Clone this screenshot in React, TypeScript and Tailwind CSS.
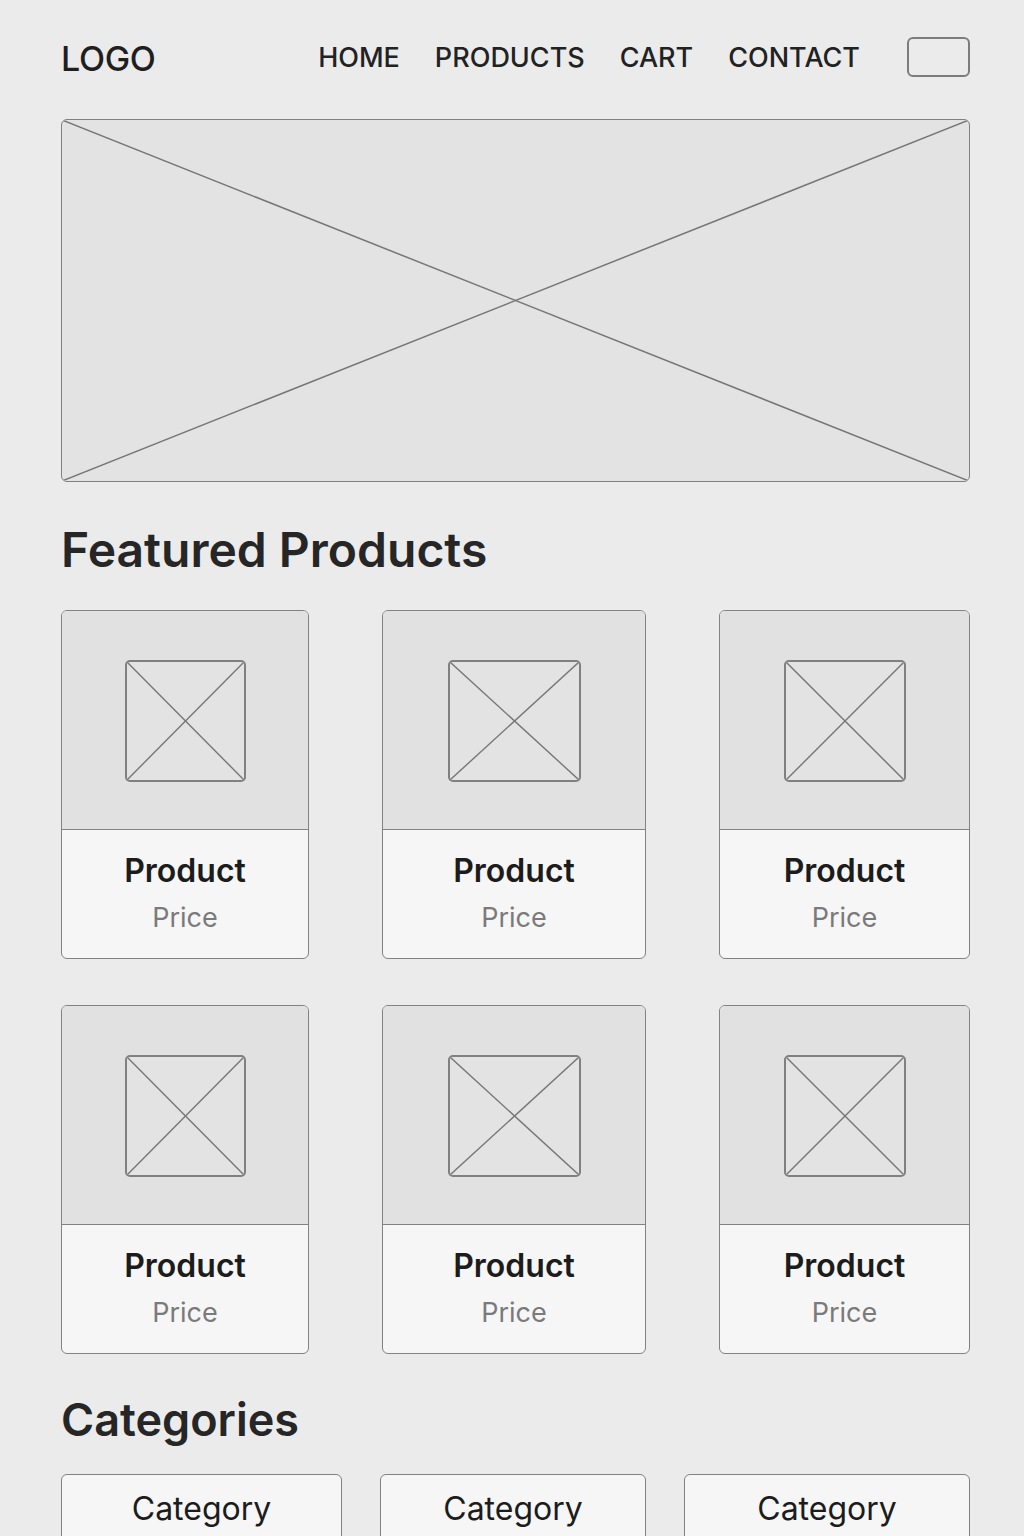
import React from 'react'

type Card = { id: number; ph: string }

const rows: Card[][] = [
  [
    { id: 1, ph: 'w-[121px]' },
    { id: 2, ph: 'w-[133px]' },
    { id: 3, ph: 'w-[122px]' },
  ],
  [
    { id: 4, ph: 'w-[121px]' },
    { id: 5, ph: 'w-[133px]' },
    { id: 6, ph: 'w-[122px]' },
  ],
]

// X-shaped line pair, stretches to whatever box it sits in
function Cross({ width = 1.4 }: { width?: number }) {
  return (
    <svg className="absolute inset-0 h-full w-full" viewBox="0 0 100 100" preserveAspectRatio="none">
      <line x1="0" y1="0" x2="100" y2="100" stroke="#767676" strokeWidth={width} vectorEffect="non-scaling-stroke" />
      <line x1="100" y1="0" x2="0" y2="100" stroke="#767676" strokeWidth={width} vectorEffect="non-scaling-stroke" />
    </svg>
  )
}

function ProductCard({ ph }: { ph: string }) {
  return (
    <div className="flex h-[349px] flex-col overflow-hidden rounded-[6px] border-[1.5px] border-[#828282] bg-[#f6f6f6]">
      <div className="flex h-[219px] items-center justify-center border-b-[1.5px] border-[#828282] bg-[#e1e1e1]">
        <div className={`relative h-[122px] ${ph} mt-[2px] overflow-hidden rounded-[5px] border-2 border-[#808080] bg-[#e3e3e3]`}>
          <Cross />
        </div>
      </div>
      <div className="flex flex-col items-center pt-[21px]">
        <div className="text-[32px] leading-[40px] font-semibold text-[#1c1c1c]">Product</div>
        <div className="mt-[10px] text-[27px] leading-[34px] text-[#7a7a7a]">Price</div>
      </div>
    </div>
  )
}

export default function App() {
  return (
    <div className="min-h-[1536px] bg-[#ebebeb] pl-[61px] pr-[54px] pt-[37px] font-['Inter','Liberation_Sans',sans-serif] text-[#222]">
      {/* header */}
      <header className="flex h-[40px] items-center justify-between">
        <div className="mt-[3px] text-[34px] font-medium leading-none tracking-[-0.01em] text-[#1f1f1f]">LOGO</div>
        <div className="flex items-center">
          <nav className="flex items-center gap-[35px] text-[27px] font-medium leading-none text-[#222]">
            <a>HOME</a>
            <a>PRODUCTS</a>
            <a>CART</a>
            <a>CONTACT</a>
          </nav>
          <div className="ml-[47px] h-[40px] w-[63px] rounded-[6px] border-2 border-[#7c7c7c]" />
        </div>
      </header>

      {/* hero */}
      <div className="relative mt-[42px] h-[363px] overflow-hidden rounded-[6px] border-[1.5px] border-[#808080] bg-[#e3e3e3]">
        <Cross width={1.5} />
      </div>

      <h2 className="mt-[44px] text-[48px] font-semibold leading-[48px] text-[#262626]">Featured Products</h2>

      <div className="mt-[36px] flex flex-col gap-[46px]">
        {rows.map((r, i) => (
          <div key={i} className="grid grid-cols-[248px_264px_251px] justify-between">
            {r.map((c) => (
              <ProductCard key={c.id} ph={c.ph} />
            ))}
          </div>
        ))}
      </div>

      <h2 className="mt-[43px] text-[45px] font-semibold leading-[46px] text-[#262626]">Categories</h2>

      <div className="mt-[31px] grid grid-cols-[281px_266px_286px] justify-between">
        {['Category', 'Category', 'Category'].map((c, i) => (
          <div
            key={i}
            className="flex h-[90px] justify-center rounded-[6px] border-[1.5px] border-[#828282] bg-[#f6f6f6] pt-[15px] text-[32px] leading-[38px] text-[#1c1c1c]"
          >
            {c}
          </div>
        ))}
      </div>
    </div>
  )
}
